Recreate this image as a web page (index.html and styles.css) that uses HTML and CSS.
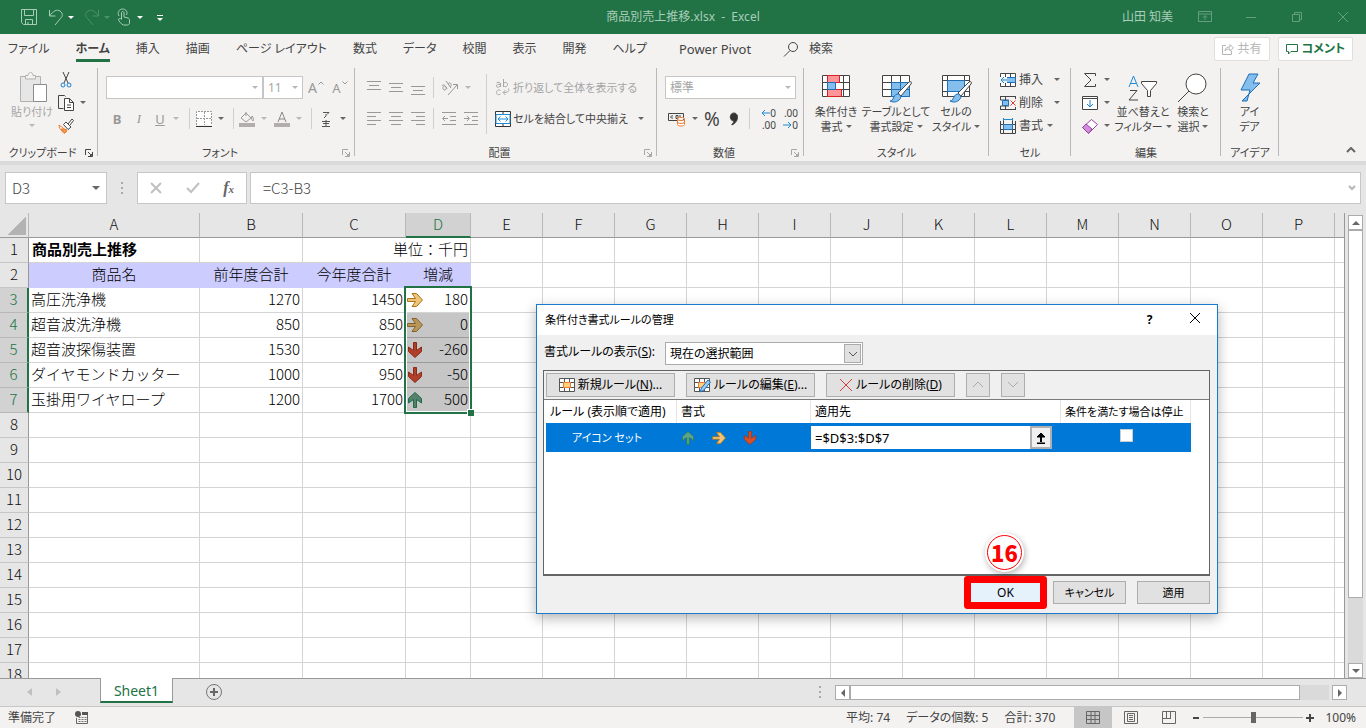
FILE: index.html
```
<!DOCTYPE html>
<html lang="ja">
<head>
    <meta charset="UTF-8">
    <meta name="viewport" content="width=device-width, initial-scale=1.0">
    <title>商品別売上推移.xlsx - Excel</title>
    <link rel="stylesheet" href="styles.css">
</head>
<body>
    <!-- shared icons -->
    <svg class="defs" aria-hidden="true">
        <symbol id="arrow" viewBox="0 0 16 16"><path d="M.5 6.500h8L5 1.500h4.500L15.500 8l-6 6.500H5l3.500-5h-8z"/></symbol>
        <symbol id="launch" viewBox="0 0 8 8"><path d="M.5 6V.5H6M3 3l3 3M7.500 3v4.500H3M7 5v2H5z" fill="none" stroke="currentColor"/></symbol>
    </svg>

    <header class="titlebar">
        <div class="quick">
            <button aria-label="上書き保存"><svg width="18" height="18" viewBox="0 0 18 18"><path d="M1.500 1.500h15v15h-13l-2-2zM4.500 1.500v6h9v-6M5.500 16.500v-5h7v5M8 14v2"/></svg></button>
            <button class="undo" aria-label="元に戻す"><svg width="16" height="18" viewBox="0 0 16 18"><path d="M1.500 2v6h6M1.500 8C5 3 9 1 12 3c4 3 2 6 0 8l-5 6"/></svg><i class="caret"></i></button>
            <button class="redo" aria-label="やり直し"><svg width="16" height="18" viewBox="0 0 16 18"><path d="M14.500 2v6h-6M14.500 8C11 3 7 1 4 3c-4 3-2 6 0 8l5 6"/></svg><i class="caret"></i></button>
            <button class="touch" aria-label="タッチ/マウス モード"><svg width="14" height="18" viewBox="0 0 14 18"><path d="M2 8C0 5 2 1 5.500 1S11 4 9.500 7M4.500 11V5c0-2 2.500-2 2.500 0v4l4 1c1 .5 1.500 1 1.500 2v3c0 1-1 2-2 2H6.500c-2 0-5-5-5-5 0-2 2-2 3-.5"/></svg><i class="caret"></i></button>
            <button class="custom" aria-label="クイック アクセス ツール バーのカスタマイズ"><i class="caret"></i></button>
        </div>
        <h1>商品別売上推移.xlsx&nbsp; -&nbsp; Excel</h1>
        <div class="window-btns">
            <span>山田 知美</span>
            <button aria-label="リボンの表示オプション"><svg width="14" height="12" viewBox="0 0 14 12"><path d="M.5.5h13v10H.5zM.5 3h13M7 9V5M5 6.500l2-2 2 2"/></svg></button>
            <button aria-label="最小化"><svg width="12" height="12" viewBox="0 0 12 12"><path d="M1 6.500h10"/></svg></button>
            <button aria-label="元に戻す(縮小)"><svg width="12" height="12" viewBox="0 0 12 12"><path d="M1.500 3.500h7v7h-7zM3.500 3.500v-2h7v7h-2"/></svg></button>
            <button aria-label="閉じる"><svg width="12" height="12" viewBox="0 0 12 12"><path d="M1 1l10 10M11 1L1 11"/></svg></button>
        </div>
    </header>

    <nav class="tabs">
        <a href="#">ファイル</a>
        <a href="#" class="active">ホーム</a>
        <a href="#">挿入</a>
        <a href="#">描画</a>
        <a href="#">ページ レイアウト</a>
        <a href="#">数式</a>
        <a href="#">データ</a>
        <a href="#">校閲</a>
        <a href="#">表示</a>
        <a href="#">開発</a>
        <a href="#">ヘルプ</a>
        <a href="#" class="latin">Power Pivot</a>
        <a href="#" class="find"><svg width="16" height="16" viewBox="0 0 16 16"><circle cx="10" cy="6" r="4.500"/><path d="M7 9.500L1 15.500"/></svg>検索</a>
        <div class="share">
            <button disabled><svg width="12" height="12" viewBox="0 0 12 12"><path d="M4 2.500H.5v9h9V8M3 8c0-3 2-4 5-4V1.500L11.500 5 8 8V6C5 6 4 6.500 3 8z"/></svg>共有</button>
            <button class="comment"><svg width="12" height="12" viewBox="0 0 12 12"><path d="M.5 1.500h11v7H5l-2.500 2.500V8.500h-2z"/></svg>コメント</button>
        </div>
    </nav>

    <section class="ribbon">
        <div class="group clipboard">
            <div class="body">
                <button class="big off"><svg width="30" height="34" viewBox="0 0 30 34"><path d="M3.500 6.500h20v25h-20z" fill="#e6e6e6" stroke="#b1b1b1"/><path d="M8.500 9V5.500H11c0-4 5-4 5 0h2.500V9z" fill="#f3f2f1" stroke="#b1b1b1"/><path d="M16.500 14.500h13v17h-13z" fill="#fff" stroke="#8c8c8c"/></svg><span>貼り付け</span><i class="caret"></i></button>
                <div class="stack">
                    <button class="tool" aria-label="切り取り"><svg width="16" height="16" viewBox="0 0 16 16"><path d="M5 0l5 11M11 0L6 11" stroke="#444"/><circle cx="5" cy="13" r="2" stroke="#1e7fcb"/><circle cx="11" cy="13" r="2" stroke="#1e7fcb"/></svg></button>
                    <button class="tool" aria-label="コピー"><svg width="16" height="16" viewBox="0 0 16 16"><path d="M5.500 13.500h-5V.5h6l1 1" stroke="#444"/><path d="M6.500 3.500h5l4 4v8h-9zM11.500 3.500v4h4M9 10h4M9 12.500h4" fill="#fff" stroke="#444"/></svg><i class="caret"></i></button>
                    <button class="tool" aria-label="書式のコピー"><svg width="16" height="16" viewBox="0 0 16 16"><path d="M1 7l8 6-3 2.500L1.500 10z" fill="#fff" stroke="#ed7d31"/><path d="M3 11l4 4 2-3-4-1z" fill="#f4a14a" stroke="#ed7d31"/><path d="M5.500 6.500L8 4l5 5-3 2.500zM10 6l4-5 1.500 1.500L12 7" fill="#fff" stroke="#444"/></svg></button>
                </div>
            </div>
            <div class="caption"><span>クリップボード</span><svg class="launcher"><use href="#launch"/></svg></div>
        </div>

        <div class="group font">
            <div class="body rows">
                <div class="row">
                    <span class="combo name"><input type="text" aria-label="フォント"><i class="caret"></i></span>
                    <span class="combo size"><input type="text" value="11" aria-label="フォント サイズ"><i class="caret"></i></span>
                    <button class="tool letter" aria-label="フォント サイズの拡大">A<svg width="6" height="4" viewBox="0 0 6 4"><path d="M.5 3.500L3 1l2.500 2.500"/></svg></button>
                    <button class="tool letter small" aria-label="フォント サイズの縮小">A<svg width="6" height="4" viewBox="0 0 6 4"><path d="M.5.5L3 3 5.500.5"/></svg></button>
                </div>
                <div class="row">
                    <button class="tool off"><b>B</b></button>
                    <button class="tool off italic"><em>I</em></button>
                    <button class="tool off"><u>U</u><i class="caret"></i></button>
                    <i class="sep"></i>
                    <button class="tool" aria-label="罫線"><svg width="16" height="16" viewBox="0 0 16 16"><path d="M.5 14V.5h15V14M8.500 1v13M1 7.500h14" stroke="#999" stroke-dasharray="2 1" fill="#fff"/><path d="M0 15.500h16" stroke="#333"/></svg><i class="caret"></i></button>
                    <i class="sep"></i>
                    <button class="tool off" aria-label="塗りつぶしの色"><svg width="16" height="16" viewBox="0 0 16 16"><path d="M7 2l5 5-5 4-5-4zM7 1v4M13 5c1.500 2 2 3 1 5-1-1-2-2-1-5z" stroke="#999"/><path d="M0 14h16" stroke="#b1aeac" stroke-width="4"/></svg><i class="caret"></i></button>
                    <button class="tool off" aria-label="フォントの色"><svg width="16" height="16" viewBox="0 0 16 16"><path d="M4 11L8 1l4 10M5 8h6" stroke="#888"/><path d="M0 14h16" stroke="#b1aeac" stroke-width="4"/></svg><i class="caret"></i></button>
                    <i class="sep"></i>
                    <button class="tool" aria-label="ふりがなの表示"><svg width="16" height="16" viewBox="0 0 16 16"><path d="M5 1.500h6L9 3.500M8 3v2L6 7M4 10.500h8M5 12.500h6M4 15.500h8M8 9v6" stroke="#555"/></svg><i class="caret"></i></button>
                </div>
            </div>
            <div class="caption"><span>フォント</span><svg class="launcher off"><use href="#launch"/></svg></div>
        </div>

        <div class="group align">
            <div class="body">
                <div class="rows">
                    <div class="row">
                        <button class="tool" aria-label="上揃え"><svg width="16" height="16" viewBox="0 0 16 16"><path d="M1 1.500h14M3 5.500h10M1 9.500h14"/></svg></button>
                        <button class="tool" aria-label="上下中央揃え"><svg width="16" height="16" viewBox="0 0 16 16"><path d="M1 3.500h14M3 7.500h10M1 11.500h14"/></svg></button>
                        <button class="tool" aria-label="下揃え"><svg width="16" height="16" viewBox="0 0 16 16"><path d="M1 6.500h14M3 10.500h10M1 14.500h14"/></svg></button>
                        <i class="sep"></i>
                        <button class="tool slant" aria-label="方向"><svg width="18" height="16" viewBox="0 0 18 16"><path d="M7 15L16 5M12 4.500h4.500V9M1 6c1-2 3-1 4 1l1 2M4 6C2 6 1 8 3 10c2 0 3-1 2-3M5 1l5 7M7 4c2-3 5 1 2 3"/></svg><i class="caret"></i></button>
                    </div>
                    <div class="row">
                        <button class="tool" aria-label="左揃え"><svg width="16" height="16" viewBox="0 0 16 16"><path d="M1 1.500h14M1 5.500h9M1 9.500h14M1 13.500h9"/></svg></button>
                        <button class="tool" aria-label="中央揃え"><svg width="16" height="16" viewBox="0 0 16 16"><path d="M1 1.500h14M3 5.500h10M1 9.500h14M3 13.500h10"/></svg></button>
                        <button class="tool" aria-label="右揃え"><svg width="16" height="16" viewBox="0 0 16 16"><path d="M1 1.500h14M6 5.500h9M1 9.500h14M6 13.500h9"/></svg></button>
                        <i class="sep"></i>
                        <button class="tool" aria-label="インデントを減らす"><svg width="16" height="16" viewBox="0 0 16 16"><path d="M1 1.500h14M9 5.500h6M9 9.500h6M1 13.500h14M7 7.500H2M4 5L1.500 7.500 4 10"/></svg></button>
                        <button class="tool" aria-label="インデントを増やす"><svg width="16" height="16" viewBox="0 0 16 16"><path d="M1 1.500h14M9 5.500h6M9 9.500h6M1 13.500h14M1 7.500h5M4 5l2.500 2.500L4 10"/></svg></button>
                    </div>
                </div>
                <i class="sep tall"></i>
                <div class="rows">
                    <button class="text off"><svg width="16" height="18" viewBox="0 0 16 18"><path d="M1.500 4c2-1.500 4-.5 4 1v3M5.500 5.500C3 5 1 6 1.500 7.500s3 .5 4-1M8.500 0v8M8.500 5c1-2.500 4-2 4 .5s-3 3-4 1M5.500 11.500c-2-1.500-4 0-4 2s2 3 4 1.500M13.500 9.500c1 3-1 4-5 4M10.500 11L8 13.500l2.500 2.500"/></svg>折り返して全体を表示する</button>
                    <button class="text"><svg width="16" height="16" viewBox="0 0 16 16"><path d="M.5.5h15v15H.5zM8 0v4M8 12v4" fill="#fff" stroke="#333"/><path d="M1 3.500h14v9H1z" fill="#fff" stroke="#1e8bd4"/><path d="M3 8h10M5.500 5.500L3 8l2.500 2.500M10.500 5.500L13 8l-2.500 2.500" stroke="#1e8bd4"/></svg>セルを結合して中央揃え<i class="caret"></i></button>
                </div>
            </div>
            <div class="caption"><span>配置</span><svg class="launcher off"><use href="#launch"/></svg></div>
        </div>

        <div class="group number">
            <div class="body rows">
                <div class="row"><span class="combo format"><input type="text" value="標準" aria-label="表示形式"><i class="caret"></i></span></div>
                <div class="row">
                    <button class="tool" aria-label="通貨表示形式"><svg width="18" height="16" viewBox="0 0 18 16"><path d="M.5 2.500h15v7H.5zM5 5c-3-1-3 3 0 2M8 4.500h2v3H8zM13 5h-2" stroke="#444"/><path d="M9.500 8c0-2 7-2 7 0v5.500c0 2-7 2-7 0zM9.500 8c0 2 7 2 7 0M9.500 11c0 2 7 2 7 0" fill="#fff" stroke="#ed7d31"/></svg><i class="caret"></i></button>
                    <button class="tool percent">%</button>
                    <button class="tool" aria-label="桁区切りスタイル"><svg width="10" height="14" viewBox="0 0 10 14"><path d="M5 1c5 0 5 9-2 12-1-1 2-2 2-4C0 9 0 1 5 1z" fill="#333"/></svg></button>
                    <i class="sep"></i>
                    <button class="tool decimals" aria-label="小数点以下の表示桁数を増やす"><span><svg width="9" height="8" viewBox="0 0 9 8"><path d="M9 4H1M4 1L1 4l3 3" stroke="#1e8bd4"/></svg>0</span><span>.00</span></button>
                    <button class="tool decimals" aria-label="小数点以下の表示桁数を減らす"><span>.00</span><span><svg width="9" height="8" viewBox="0 0 9 8"><path d="M0 4h8M5 1l3 3-3 3" stroke="#1e8bd4"/></svg>0</span></button>
                </div>
            </div>
            <div class="caption"><span>数値</span><svg class="launcher off"><use href="#launch"/></svg></div>
        </div>

        <div class="group styles">
            <div class="body">
                <button class="big"><svg width="30" height="34" viewBox="0 0 30 34"><path d="M1.500 5.500h27v21h-27zM1 12.500h28M1 19.500h28M6.500 5v22M22.500 5v22" fill="#fff" stroke="#444"/><path d="M6.500 5.500h12v7h-12zM6.500 19.500h14v7h-14z" fill="#ff9499" stroke="#d92121"/><path d="M6.500 12.500h8v7h-8z" fill="#83beec" stroke="#1e6fb8"/></svg><span>条件付き<br>書式<i class="caret"></i></span></button>
                <button class="big wide"><svg width="34" height="34" viewBox="0 0 34 34"><path d="M3.500 5.500h27v21h-27zM3 12.500h28M3 19.500h28M12.500 5v22M21.500 5v22" fill="#fff" stroke="#444"/><path d="M12.500 12.500h18v14h-18z" fill="#83beec" stroke="#1e6fb8"/><path d="M21.500 13v13M13 19.500h17" stroke="#1e6fb8"/><path d="M19 23l11-11c2-1 3 0 2 2L22 26z" fill="#fff" stroke="#444"/><path d="M11 31c4 0 3-6 7-7 4 0 5 4 2 6-3 3-7 2-9 1z" fill="#83beec" stroke="#1e6fb8"/></svg><span>テーブルとして<br>書式設定<i class="caret"></i></span></button>
                <button class="big"><svg width="34" height="34" viewBox="0 0 34 34"><path d="M3.500 5.500h27v21h-27zM3 10.500h28M3 21.500h28M8.500 5v22M25.500 5v22" fill="#fff" stroke="#444"/><path d="M8.500 10.500h17v11h-17z" fill="#83beec" stroke="#1e6fb8"/><path d="M19 23l11-11c2-1 3 0 2 2L22 26z" fill="#fff" stroke="#444"/><path d="M11 31c4 0 3-6 7-7 4 0 5 4 2 6-3 3-7 2-9 1z" fill="#83beec" stroke="#1e6fb8"/></svg><span>セルの<br>スタイル<i class="caret"></i></span></button>
            </div>
            <div class="caption"><span>スタイル</span></div>
        </div>

        <div class="group cells">
            <div class="body stack">
                <button class="text"><svg width="16" height="16" viewBox="0 0 16 16"><path d="M.5 1.500h15v13H.5zM5.500 1v14M10.500 1v14M0 5.500h16M0 10.500h16" fill="#fff" stroke="#444"/><path d="M6 5.500h9.500v5H6z" fill="#83beec" stroke="#1e6fb8"/><path d="M0 5h7v6H0z" fill="#f3f2f1" stroke="none"/><path d="M7 8H1M4 5L1 8l3 3" stroke="#1e8bd4"/></svg>挿入<i class="caret"></i></button>
                <button class="text"><svg width="16" height="16" viewBox="0 0 16 16"><path d="M.5 1.500h15M.5 14.500h15M.5 1v4h15V1M.5 15v-4h15v4M5.500 1v14" stroke="#444"/><path d="M2.500 5.500h6v5h-6z" fill="#83beec" stroke="#1e6fb8"/><path d="M9 4h7v8H9z" fill="#f3f2f1" stroke="none"/><path d="M10.500 5.500l5 5M15.500 5.500l-5 5" stroke="#e03c31"/></svg>削除<i class="caret"></i></button>
                <button class="text near"><svg width="16" height="16" viewBox="0 0 16 16"><path d="M.5 3v12.500h15V3M0 6.500h16M0 11.500h16M3.500 3v12M12.500 3v12" stroke="#444"/><path d="M3.500 6.500h9v5h-9z" fill="#83beec" stroke="#1e6fb8"/><path d="M4 1.500h8M3.500 0v3M12.500 0v3" stroke="#1e8bd4"/></svg>書式<i class="caret"></i></button>
            </div>
            <div class="caption"><span>セル</span></div>
        </div>

        <div class="group edit">
            <div class="body">
                <div class="stack">
                    <button class="tool" aria-label="合計"><svg width="16" height="16" viewBox="0 0 16 16"><path d="M13.500 4V1.500h-11L9 8l-6.500 6.500h11V12" stroke="#444"/></svg><i class="caret"></i></button>
                    <button class="tool" aria-label="フィル"><svg width="16" height="16" viewBox="0 0 16 16"><path d="M.5 1.500h15v13H.5zM1 3.500h14" fill="#fff" stroke="#444"/><path d="M8 5v7M5 9l3 3 3-3" stroke="#1e7fcb"/></svg><i class="caret"></i></button>
                    <button class="tool" aria-label="クリア"><svg width="16" height="16" viewBox="0 0 16 16"><path d="M.5 9.500l9-8 6 5-9 9z" fill="#fff" stroke="#9b3fa8"/><path d="M.5 9.500L4 6l6 5-3.500 4.500z" fill="#cf8fd8" stroke="#9b3fa8"/></svg><i class="caret"></i></button>
                </div>
                <button class="big"><svg width="30" height="34" viewBox="0 0 30 34"><path d="M1 17L5.500 6 10 17M3 13.500h5" stroke="#1e8bd4"/><path d="M2 20.500h7l-8 9.500h9" stroke="#444"/><path d="M13.500 11.500h15v2l-6 7v6h-3v-6l-6-7z" fill="#fff" stroke="#444"/></svg><span>並べ替えと<br>フィルター<i class="caret"></i></span></button>
                <button class="big"><svg width="30" height="34" viewBox="0 0 30 34"><circle cx="18" cy="14" r="10" fill="#fff" stroke="#444"/><path d="M11 21L0 32" stroke="#444"/></svg><span>検索と<br>選択<i class="caret"></i></span></button>
            </div>
            <div class="caption"><span>編集</span></div>
        </div>

        <div class="group ideas">
            <div class="body">
                <button class="big"><svg width="24" height="34" viewBox="0 0 24 34"><path d="M11 4h9l-5 9h7L4 31h5l3-11H3z" fill="#83beec" stroke="#1e6fb8"/></svg><span>アイ<br>デア</span></button>
            </div>
            <div class="caption"><span>アイデア</span></div>
        </div>
        <button class="collapse" aria-label="リボンを折りたたむ"><svg width="10" height="6" viewBox="0 0 10 6"><path d="M1 5l4-4 4 4" stroke="#666" stroke-width="2"/></svg></button>
    </section>

    <section class="formula">
        <div class="namebox"><input type="text" value="D3" aria-label="名前ボックス"><i class="caret"></i></div>
        <i class="dots"></i>
        <div class="fx">
            <button aria-label="キャンセル"><svg width="12" height="12" viewBox="0 0 12 12"><path d="M1 1l10 10M11 1L1 11" stroke="#c0c0c0" stroke-width="2"/></svg></button>
            <button aria-label="入力"><svg width="14" height="12" viewBox="0 0 14 12"><path d="M1 6l4 4 8-9" stroke="#c0c0c0" stroke-width="2"/></svg></button>
            <button class="fn" aria-label="関数の挿入">f<small>x</small></button>
        </div>
        <div class="expr"><input type="text" value="=C3-B3" aria-label="数式バー"><svg width="8" height="6" viewBox="0 0 8 6"><path d="M1 1l3 3 3-3" stroke="#b5b5b5" stroke-width="2"/></svg></div>
    </section>

    <main class="sheet">
        <div class="grid" id="grid">
            <table>
                <colgroup id="cols"><col class="rowno"><col class="a"><col class="b"><col class="b"><col class="d"></colgroup>
                <thead><tr id="letters"><th class="corner"></th><th>A</th><th>B</th><th>C</th><th class="sel">D</th></tr></thead>
                <tbody id="rows">
                    <tr><th>1</th><td class="bold">商品別売上推移</td><td></td><td class="num" colspan="2">単位：千円</td></tr>
                    <tr class="head"><th>2</th><td>商品名</td><td>前年度合計</td><td>今年度合計</td><td>増減</td></tr>
                    <tr><th class="sel">3</th><td>高圧洗浄機</td><td class="num">1270</td><td class="num">1450</td><td class="num first"><svg class="mark flat"><use href="#arrow"/></svg>180<i class="selection"></i></td></tr>
                    <tr><th class="sel">4</th><td>超音波洗浄機</td><td class="num">850</td><td class="num">850</td><td class="num picked"><svg class="mark flat dim"><use href="#arrow"/></svg>0</td></tr>
                    <tr><th class="sel">5</th><td>超音波探傷装置</td><td class="num">1530</td><td class="num">1270</td><td class="num picked"><svg class="mark down"><use href="#arrow"/></svg>-260</td></tr>
                    <tr><th class="sel">6</th><td>ダイヤモンドカッター</td><td class="num">1000</td><td class="num">950</td><td class="num picked"><svg class="mark down"><use href="#arrow"/></svg>-50</td></tr>
                    <tr><th class="sel">7</th><td>玉掛用ワイヤロープ</td><td class="num">1200</td><td class="num">1700</td><td class="num picked"><svg class="mark up"><use href="#arrow"/></svg>500</td></tr>
                </tbody>
            </table>
        </div>
        <div class="vscroll">
            <button aria-label="上へ"><i class="caret flip"></i></button>
            <div class="track"><div class="thumb"></div></div>
            <button aria-label="下へ"><i class="caret"></i></button>
        </div>
    </main>

    <div class="sheettabs">
        <div class="arrows"><i></i><i></i></div>
        <a href="#" class="tab">Sheet1</a>
        <button class="add" aria-label="新しいシート"><svg width="16" height="16" viewBox="0 0 16 16"><circle cx="8" cy="8" r="7.500" stroke="#777"/><path d="M8 4v8M4 8h8" stroke="#666" stroke-width="2"/></svg></button>
        <i class="dots"></i>
        <div class="hscroll">
            <button aria-label="左へ"><i class="caret left"></i></button>
            <div class="track"><div class="thumb"></div></div>
            <button aria-label="右へ"><i class="caret right"></i></button>
        </div>
    </div>

    <footer class="status">
        <span>準備完了</span>
        <svg class="macro" width="14" height="14" viewBox="0 0 14 14"><path d="M1.500 7v5.500h11V4" stroke="#666"/><path d="M3.500 6.500h8M3.500 8.500h8M3.500 10.500h8" stroke="#777" stroke-dasharray="2 1"/><circle cx="3" cy="3" r="3" fill="#555" stroke="none"/><path d="M7 1h6v3H7z" fill="#555" stroke="none"/></svg>
        <div class="stats"><span>平均: 74</span><span>データの個数: 5</span><span>合計: 370</span></div>
        <button class="view on" aria-label="標準"><svg width="14" height="14" viewBox="0 0 14 14"><path d="M.5.5h13v12H.5zM5 0v13M9 0v13M0 4.500h14M0 8.500h14"/></svg></button>
        <button class="view" aria-label="ページ レイアウト"><svg width="14" height="14" viewBox="0 0 14 14"><path d="M.5.5h13v12H.5zM3.500 2.500h7v8h-7zM5 4.500h4M5 6.500h4M5 8.500h4"/></svg></button>
        <button class="view" aria-label="改ページ プレビュー"><svg width="14" height="14" viewBox="0 0 14 14"><path d="M.5.5h13v12H.5zM4.500 0v7.500M8.500 0v7.500M0 7.500h9"/></svg></button>
        <div class="zoom">
            <button aria-label="縮小"><svg width="8" height="8" viewBox="0 0 8 8"><path d="M1 4h6" stroke-width="2"/></svg></button>
            <input type="range" min="10" max="190" value="100" aria-label="ズーム">
            <button aria-label="拡大"><svg width="8" height="8" viewBox="0 0 8 8"><path d="M0 4h8M4 0v8" stroke-width="2"/></svg></button>
            <span>100%</span>
        </div>
    </footer>

    <div class="dialog" role="dialog" aria-labelledby="dialogTitle">
        <div class="dialog-title">
            <h2 id="dialogTitle">条件付き書式ルールの管理</h2>
            <button>?</button>
            <button aria-label="閉じる"><svg width="12" height="12" viewBox="0 0 12 12"><path d="M1 1l10 10M11 1L1 11" stroke="#000"/></svg></button>
        </div>
        <div class="scope">
            <label for="scope">書式ルールの表示(<u>S</u>):</label>
            <div class="select">
                <select id="scope"><option>現在の選択範囲</option></select>
                <i><svg width="10" height="6" viewBox="0 0 10 6"><path d="M1 1l4 4 4-4" stroke="#555"/></svg></i>
            </div>
        </div>
        <div class="panel">
            <div class="panel-tools">
                <button><svg width="16" height="16" viewBox="0 0 16 16"><path d="M.5 1.500h15v13H.5zM5.500 1v14M10.500 1v14M0 5.500h16M0 10.500h16" fill="#fff" stroke="#555"/><path d="M4.500 5.500h7v5h-7z" fill="#ffd07a" stroke="#ed7d31"/></svg><span>新規ルール(<u>N</u>)...</span></button>
                <button><svg width="17" height="16" viewBox="0 0 17 16"><path d="M.5 1.500h15v13H.5zM5.500 1v14M10.500 1v14M0 5.500h16M0 10.500h16" fill="#fff" stroke="#555"/><path d="M4.500 5.500h7v5h-7z" fill="#ffd07a" stroke="#ed7d31"/><path d="M6 15l1.500-4L14 3l2.500 2L10 13z" fill="#9ad0f5" stroke="#1e6fb8"/></svg><span>ルールの編集(<u>E</u>)...</span></button>
                <button><svg width="14" height="14" viewBox="0 0 14 14"><path d="M1 1l12 12M13 1L1 13" stroke="#e03c3c"/></svg><span>ルールの削除(<u>D</u>)</span></button>
                <button class="move" disabled aria-label="上へ移動"><svg width="12" height="8" viewBox="0 0 12 8"><path d="M1 6l5-5 5 5" stroke="#aaa"/></svg></button>
                <button class="move" disabled aria-label="下へ移動"><svg width="12" height="8" viewBox="0 0 12 8"><path d="M1 1l5 5 5-5" stroke="#aaa"/></svg></button>
            </div>
            <table class="rules">
                <thead><tr><th>ルール (表示順で適用)</th><th>書式</th><th>適用先</th><th>条件を満たす場合は停止</th></tr></thead>
                <tbody>
                    <tr>
                        <td class="rule-name">アイコン セット</td>
                        <td><div class="icon-set"><svg class="mark up"><use href="#arrow"/></svg><svg class="mark flat"><use href="#arrow"/></svg><svg class="mark down"><use href="#arrow"/></svg></div></td>
                        <td><div class="range"><input type="text" value="=$D$3:$D$7" aria-label="適用先"><button aria-label="範囲の選択"><svg width="10" height="12" viewBox="0 0 10 12"><path d="M5 10V3M1 11.500h8" stroke="#000" stroke-width="2"/><path d="M1 5l4-4 4 4z" fill="#000"/></svg></button></div></td>
                        <td class="stop"><input type="checkbox" aria-label="条件を満たす場合は停止"></td>
                    </tr>
                </tbody>
            </table>
        </div>
        <div class="dialog-btns">
            <button class="ok">OK</button>
            <button>キャンセル</button>
            <button>適用</button>
            <span class="step">16</span>
        </div>
    </div>

    <script>
        const grid = document.getElementById('grid')
        const cols = document.getElementById('cols')
        const letters = document.getElementById('letters')
        const rows = document.getElementById('rows')

        // as many columns and rows as the window shows
        const colCount = Math.max(1, Math.ceil((grid.clientWidth - 471) / 72))
        const rowCount = Math.max(7, Math.ceil((grid.clientHeight - 25) / 25))

        for(let i = 0; i < colCount; i++){
            cols.appendChild(document.createElement('col'))
            const th = document.createElement('th')
            // the letter sits in the middle, leave it out where that is past the edge
            if(471 + i * 72 + 36 < grid.clientWidth){
                th.textContent = i < 22 ? String.fromCharCode(69 + i) : 'A' + String.fromCharCode(43 + i)
            }
            letters.appendChild(th)
        }

        // blank cells to the right of the data
        Array.from(rows.children).forEach(row => {
            for(let i = 0; i < colCount; i++){
                row.insertCell()
            }
        })

        // blank rows below the data
        for(let i = 8; i <= rowCount; i++){
            const row = rows.insertRow()
            const th = document.createElement('th')
            th.textContent = i
            row.appendChild(th)
            for(let j = 0; j < colCount + 4; j++){
                row.insertCell()
            }
        }
    </script>
</body>
</html>
```
FILE: styles.css
```
*{
    box-sizing: border-box;
    padding: 0;
    margin: 0;
}

body{
    height: 100vh;
    display: flex;
    flex-direction: column;
    position: relative;
    overflow: hidden;
    background-color: #e6e6e6;
    color: #444;
    font-family: "Noto Sans", "Noto Sans CJK JP", sans-serif;
    font-size: 12px;
    line-height: 16px;
    font-feature-settings: "palt", "kern";
}

button,input,select{
    font: inherit;
    font-feature-settings: inherit;
    color: inherit;
    border: 0;
    background: none;
}

input{
    min-width: 0;
    outline: 0;
}

a{
    color: inherit;
    text-decoration: none;
}

svg{
    fill: none;
    stroke: currentColor;
    flex: none;
}

.defs{
    position: absolute;
    width: 0;
    height: 0;
}

.caret{
    flex: none;
    display: inline-block;
    border: 3px solid transparent;
    border-top-color: #666;
    border-bottom: 0;
}

.flip{
    transform: rotate(180deg);
}

.off{
    color: #a6a6a6;
}

.off .caret{
    border-top-color: #b8b8b8;
}

/* title bar */
.titlebar{
    flex: none;
    height: 34px;
    display: grid;
    grid-template-columns: 1fr auto 1fr;
    align-items: center;
    background-color: #217346;
    color: #a9cdb8;
}

.titlebar h1{
    font-size: 12px;
    font-weight: 400;
}

.titlebar button{
    display: flex;
    align-items: center;
    gap: 4px;
}

.quick{
    display: flex;
    gap: 10px;
    padding-left: 20px;
}

.quick .caret{
    border-top-color: #fff;
}

.quick .redo{
    color: #4d9069;
}

.quick .redo .caret{
    border-top-color: #4d9069;
}

.quick .touch{
    margin-left: -3px;
    gap: 6px;
}

.quick .custom{
    margin-left: 4px;
    padding-top: 4px;
}

.custom .caret{
    position: relative;
}

.custom .caret::before{
    content: "";
    position: absolute;
    left: -3px;
    top: -6px;
    width: 6px;
    height: 1px;
    background-color: #fff;
}

.window-btns{
    display: flex;
    justify-content: flex-end;
    align-items: center;
}

.window-btns span{
    margin-right: 9px;
}

.window-btns button{
    width: 46px;
    justify-content: center;
    color: #65a07e;
}

/* ribbon tabs */
.tabs{
    flex: none;
    height: 32px;
    display: flex;
    gap: 26px;
    padding: 0 13px 0 8px;
    background-color: #f3f2f1;
    line-height: 30px;
}

.tabs a{
    white-space: nowrap;
    height: 28px;
}

.tabs .active{
    font-weight: 700;
    border-bottom: 3px solid #217346;
}

.tabs .latin{
    font-size: 13px;
    padding: 0 6px;
}

.tabs .find{
    display: flex;
    align-items: center;
    gap: 10px;
    height: 30px;
}

.share{
    margin-left: auto;
    display: flex;
    gap: 8px;
    padding-top: 3px;
}

.share button{
    height: 24px;
    padding: 0 7px;
    display: flex;
    align-items: center;
    gap: 4px;
    line-height: 22px;
    background-color: #fff;
    border: 1px solid #e1dfdd;
    border-radius: 2px;
    color: #b5b5b5;
}

.share .comment{
    color: #217346;
    font-weight: 700;
}

/* ribbon */
.ribbon{
    flex: none;
    height: 99px;
    display: flex;
    padding-top: 2px;
    background-color: #f3f2f1;
    border-bottom: 4px solid #dadada;
}

.group{
    flex: none;
    display: flex;
    flex-direction: column;
    background: linear-gradient(#b8b8b8, #b8b8b8) right top / 1px 88px no-repeat;
}

.clipboard{ width: 98px; }
.font{ width: 257px; }
.align{ width: 302px; }
.number{ width: 147px; }
.styles{ width: 185px; }
.cells{ width: 82px; }
.edit{ width: 150px; }
.ideas{ width: 58px; }

.body{
    height: 77px;
    display: flex;
}

.caption{
    display: flex;
    align-items: center;
    font-size: 11px;
}

.caption span{
    flex: 1;
    text-align: center;
}

.launcher{
    width: 8px;
    height: 8px;
    margin-right: 5px;
}

.rows{
    flex-direction: column;
    padding: 4px 4px 0 8px;
}

.row{
    height: 31px;
    display: flex;
    align-items: center;
}

.stack{
    display: flex;
    flex-direction: column;
}

.tool{
    height: 23px;
    padding: 0 3px;
    display: flex;
    align-items: center;
    justify-content: center;
    gap: 6px;
    min-width: 22px;
}

.sep{
    width: 1px;
    height: 21px;
    margin: 0 4px;
    background-color: #d2d0ce;
}

.sep.tall{
    height: 60px;
    margin: 6px 0 0;
}

.big{
    display: flex;
    flex-direction: column;
    align-items: center;
    padding-top: 2px;
    width: 60px;
    font-size: 11px;
    line-height: 15px;
    white-space: nowrap;
}

.big .caret{
    margin-left: 3px;
    vertical-align: 3px;
}

.clipboard .body{
    padding-left: 6px;
}

.clipboard .big{
    width: 52px;
}

.clipboard .big .caret{
    margin: 5px 0 0;
}

.clipboard .tool{
    justify-content: flex-start;
    padding: 0;
}

.combo{
    flex: none;
    height: 23px;
    display: flex;
    align-items: center;
    padding: 0 4px;
    background-color: #fff;
    border: 1px solid #c6c6c6;
    color: #a6a6a6;
}

.combo input{
    flex: 1;
    width: 0;
}

.combo .caret{
    border-top-color: #b8b8b8;
}

.combo.name{ width: 157px; }
.combo.size{ width: 40px; }
.combo.format{ width: 131px; }

.letter{
    font-size: 14px;
    gap: 1px;
    margin-left: 2px;
    padding: 0;
}

.letter svg{
    margin-bottom: 10px;
}

.letter.small{
    font-size: 13px;
}

.font b,.font em,.font u{
    font-size: 13px;
    width: 16px;
    text-align: center;
}

.font em{
    font-family: "Liberation Serif", serif;
}

.font .row .tool{
    color: #999;
}

.font .tool .caret{
    margin-right: 3px;
}

.align .tool{
    color: #999;
}

.slant .caret{
    border-top-color: #b8b8b8;
}

.text{
    height: 31px;
    display: flex;
    align-items: center;
    gap: 2px;
    white-space: nowrap;
}

.align .text{
    font-size: 11px;
}

.text .caret{
    margin-left: 8px;
}

.percent{
    font-size: 19px;
}

.decimals{
    flex-direction: column;
    gap: 0;
    padding: 0;
    font-size: 10px;
    line-height: 12px;
    height: 24px;
    align-items: flex-end;
}

.styles .body{
    padding-left: 2px;
}

.cells .text{
    height: 23px;
    padding-left: 11px;
    gap: 3px;
}

.cells .text.near .caret{
    margin-left: 1px;
}

.edit .body{
    padding-left: 8px;
}

.edit .stack{
    width: 34px;
}

.edit .big:last-child{
    width: 40px;
}

.ideas .big{
    width: 57px;
}

.collapse{
    margin: auto 10px 4px auto;
}

/* formula bar */
.formula{
    flex: none;
    height: 48px;
    display: flex;
    padding: 7px 5px 9px;
    font-family: "Noto Sans CJK JP", sans-serif;
    font-feature-settings: normal;
    font-weight: 300;
    font-size: 15px;
}

.namebox,.fx,.expr{
    display: flex;
    align-items: center;
    background-color: #fff;
    border: 1px solid #c6c6c6;
}

.namebox{
    width: 102px;
    padding: 0 6px;
}

.namebox input{
    flex: 1;
}

.namebox .caret{
    border-width: 4px 4px 0;
}

.dots{
    width: 2px;
    height: 12px;
    align-self: center;
    margin: 0 14px;
    background: repeating-linear-gradient(#aaa 0 2px, transparent 2px 5px);
}

.fx{
    width: 110px;
    margin-right: 3px;
    padding: 0 12px;
    justify-content: space-between;
}

.fn{
    font-family: "Liberation Serif", serif;
    font-style: italic;
    font-size: 16px;
    font-weight: 700;
    color: #666;
}

.fn small{
    font-size: 11px;
}

.expr{
    flex: 1;
    padding: 0 4px 0 12px;
}

.expr input{
    flex: 1;
}

/* sheet */
.sheet{
    flex: 1;
    min-height: 0;
    display: flex;
}

.grid{
    flex: 1;
    min-width: 0;
    overflow: hidden;
    background-color: #fff;
    border-right: 1px solid #999;
}

.grid table{
    table-layout: fixed;
    width: 0;
    border-spacing: 0;
    color: #000;
    font-family: "Noto Sans CJK JP", sans-serif;
    font-feature-settings: normal;
    font-weight: 300;
    font-size: 15px;
    line-height: 22px;
}

.grid col{ width: 72px; }
.grid .rowno{ width: 29px; }
.grid .a{ width: 171px; }
.grid .b{ width: 103px; }
.grid .d{ width: 65px; }

.grid th{
    height: 25px;
    padding-bottom: 2px;
    font-weight: 300;
    color: #111;
    background-color: #e6e6e6;
    border-right: 1px solid #999;
    border-bottom: 1px solid #c6c6c6;
}

.grid thead th{
    border-right-color: #b8b8b8;
    border-bottom-color: #999;
}

.grid .sel{
    background-color: #d2d2d2;
    color: #217346;
}

.grid thead .sel{
    padding-bottom: 1px;
    border-bottom: 2px solid #217346;
}

.grid tbody .sel{
    border-right: 2px solid #217346;
    border-bottom-color: #b8b8b8;
}

.grid .corner{
    background: linear-gradient(135deg, transparent 50%, #b3b3b3 50%) 8px 4px / 18px 18px no-repeat #e6e6e6;
}

.grid td{
    height: 25px;
    padding: 0 2px 2px;
    white-space: nowrap;
    border-right: 1px solid #d4d4d4;
    border-bottom: 1px solid #d4d4d4;
}

.grid .bold{
    font-weight: 700;
    padding-left: 3px;
}

.grid .num{
    text-align: right;
}

.head td:nth-child(-n+5){
    text-align: center;
    background-color: #ccf;
    border-color: #ccf;
}

.picked{
    background-color: #c6c6c6;
}

.grid td.picked{
    border-bottom-color: #999;
}

.mark{
    width: 16px;
    height: 16px;
}

.grid .mark{
    float: left;
    margin: 4px 0 0 -1px;
}

.flat{
    fill: #f0c478;
    stroke: #a8741e;
}

.flat.dim{
    fill: #b8965a;
    stroke: #85622a;
}

.up{
    fill: #54806c;
    stroke: #1f6b4c;
    transform: rotate(-90deg);
}

.down{
    fill: #b0402a;
    stroke: #8a2a18;
    transform: rotate(90deg);
}

.first{
    position: relative;
}

/* frame over D3:D7 */
.selection{
    position: absolute;
    left: -2px;
    right: -2px;
    top: -2px;
    height: 128px;
    border: 2px solid #217346;
    box-shadow: inset 0 0 0 1px #fff;
}

.selection::after{
    content: "";
    position: absolute;
    right: -4px;
    bottom: -4px;
    width: 6px;
    height: 6px;
    background-color: #217346;
    border: 1px solid #fff;
    border-width: 1px 0 0 1px;
}

.vscroll{
    width: 21px;
    padding: 2px 3px 0;
    display: flex;
    flex-direction: column;
}

.vscroll button,.hscroll button{
    flex: none;
    width: 15px;
    height: 15px;
    display: flex;
    align-items: center;
    justify-content: center;
    background-color: #fff;
    border: 1px solid #ababab;
}

.vscroll .caret,.hscroll .caret{
    border-width: 4px 4px 0;
}

.track{
    flex: 1;
    background-color: #dadada;
}

.thumb{
    background-color: #fff;
    border: 1px solid #ababab;
}

.vscroll .thumb{
    height: 85%;
}

/* sheet tabs */
.sheettabs{
    flex: none;
    height: 28px;
    display: flex;
    align-items: flex-start;
    padding-right: 19px;
    border-top: 1px solid #999;
}

.arrows{
    width: 100px;
    height: 25px;
    display: flex;
    align-items: center;
    justify-content: center;
    gap: 24px;
    padding-right: 12px;
}

.arrows i{
    border: 4px solid transparent;
    border-right: 5px solid #c0c0c0;
    border-left: 0;
}

.arrows i:last-child{
    border-right: 0;
    border-left: 5px solid #c0c0c0;
}

.tab{
    width: 73px;
    height: 25px;
    margin-top: -1px;
    text-align: center;
    line-height: 26px;
    font-size: 14px;
    color: #217346;
    background-color: #fff;
    border: 1px solid #999;
    border-width: 0 1px 2px;
    border-bottom-color: #217346;
}

.add{
    margin: 5px auto 0 33px;
    height: 16px;
}

.sheettabs .dots{
    align-self: flex-start;
    margin-top: 7px;
}

.hscroll{
    width: 38%;
    margin-top: 6px;
    display: flex;
}

.hscroll .track{
    margin-right: 3px;
}

.hscroll .thumb{
    width: 94%;
    height: 15px;
}

.left{
    transform: rotate(90deg);
}

.right{
    transform: rotate(-90deg);
}

/* status bar */
.status{
    flex: none;
    height: 22px;
    display: flex;
    align-items: center;
    padding: 0 10px 0 8px;
    background-color: #f3f2f1;
    border-top: 1px solid #c6c6c6;
}

.macro{
    margin-left: 19px;
}

.stats{
    margin-left: auto;
    margin-right: 19px;
    display: flex;
    gap: 16px;
}

.view{
    width: 38px;
    height: 21px;
    display: flex;
    align-items: center;
    justify-content: center;
    color: #666;
}

.view.on{
    background-color: #c6c6c6;
}

.zoom{
    display: flex;
    align-items: center;
    gap: 3px;
    margin-left: 4px;
}

.zoom button{
    display: flex;
}

.zoom input{
    appearance: none;
    width: 100px;
    height: 12px;
    background: linear-gradient(#ababab, #ababab) center / 100% 1px no-repeat;
}

.zoom input::-webkit-slider-thumb{
    appearance: none;
    width: 5px;
    height: 11px;
    background-color: #666;
}

.zoom span{
    margin-left: 8px;
}

/* rules manager dialog */
.dialog{
    position: absolute;
    left: 536px;
    top: 304px;
    width: 682px;
    color: #000;
    background-color: #f0f0f0;
    border: 1px solid #1979ca;
    box-shadow: 0 4px 12px rgba(0, 0, 0, 0.3);
}

.dialog-title{
    height: 30px;
    display: flex;
    align-items: center;
    padding-left: 8px;
    background-color: #fff;
}

.dialog-title h2{
    flex: 1;
    font-size: 11px;
    font-weight: 400;
}

.dialog-title button{
    width: 45px;
    font-weight: 700;
}

.scope{
    height: 35px;
    display: flex;
    align-items: center;
    padding: 2px 7px 0;
}

.scope label{
    width: 121px;
    padding-bottom: 4px;
}

.select{
    position: relative;
    width: 198px;
}

.select select{
    appearance: none;
    display: block;
    width: 100%;
    height: 23px;
    padding: 0 4px;
    background-color: #fff;
    border: 1px solid #ababab;
}

.select i{
    position: absolute;
    right: 2px;
    top: 2px;
    width: 17px;
    height: 19px;
    display: flex;
    align-items: center;
    justify-content: center;
    background-color: #e1e1e1;
    border: 1px solid #ababab;
    pointer-events: none;
}

.panel{
    margin: 0 7px 0 6px;
    height: 206px;
    background-color: #fff;
    border: 1px solid #646464;
    border-bottom-width: 2px;
}

.panel-tools{
    height: 29px;
    display: flex;
    align-items: center;
    gap: 11px;
    padding-left: 2px;
    background-color: #f0f0f0;
    border-bottom: 1px solid #7a7a7a;
}

.panel-tools button,.dialog-btns button{
    height: 24px;
    display: flex;
    align-items: center;
    justify-content: center;
    gap: 3px;
    background-color: #e1e1e1;
    border: 1px solid #adadad;
}

.panel-tools button{
    width: 129px;
}

.panel-tools .move{
    width: 24px;
}

.rules{
    table-layout: fixed;
    width: 645px;
    margin-left: 2px;
    border-spacing: 0;
}

.rules th{
    height: 23px;
    padding-left: 4px;
    font-weight: 400;
    text-align: left;
    white-space: nowrap;
    border-right: 1px solid #e5e5e5;
}

.rules th:nth-child(1){ width: 131px; }
.rules th:nth-child(2){ width: 134px; }
.rules th:nth-child(3){ width: 250px; }
.rules th:nth-child(4){ font-size: 11px; }

.rules td{
    height: 29px;
    background-color: #0078d7;
}

.rules .rule-name{
    padding-left: 26px;
    font-size: 11px;
    color: #fff;
}

.icon-set{
    display: flex;
    gap: 17px;
    padding-left: 4px;
}

.icon-set .mark{
    width: 14px;
    height: 14px;
}

.icon-set .up{
    fill: #5ba58a;
    stroke: #2b7a5c;
}

.icon-set .down{
    fill: #d94f2b;
    stroke: #a83a1c;
}

.range{
    display: flex;
    width: 241px;
    height: 23px;
}

.range input{
    flex: 1;
    padding: 0 4px;
    font-size: 13px;
    background-color: #fff;
}

.range button{
    width: 22px;
    display: flex;
    align-items: center;
    justify-content: center;
    background-color: #f0f0f0;
    border: 2px solid #b0b0b0;
}

.stop{
    text-align: center;
}

.stop input{
    appearance: none;
    display: inline-block;
    width: 13px;
    height: 13px;
    background-color: #fff;
    border: 1px solid #ccc;
}

.dialog-btns{
    position: relative;
    display: flex;
    justify-content: flex-end;
    gap: 11px;
    padding: 5px 7px 9px;
    font-size: 11px;
}

.dialog-btns button{
    width: 73px;
    height: 23px;
}

.dialog-btns .ok{
    font-size: 12px;
    background-color: #e5f1fb;
    border: 2px solid #f00;
    border-radius: 1px;
    box-shadow: 0 0 0 5px #f00;
}

/* step number */
.step{
    position: absolute;
    right: 195px;
    top: -41px;
    width: 35px;
    height: 35px;
    text-align: center;
    line-height: 32px;
    font-family: "Noto Sans CJK JP", sans-serif;
    font-size: 22px;
    font-weight: 900;
    color: #f00;
    background-color: #fff;
    border: 1px solid #f00;
    border-radius: 50%;
    box-shadow: 0 0 0 2px #fff, 1px 2px 6px 2px rgba(0, 0, 0, 0.3);
}
```
